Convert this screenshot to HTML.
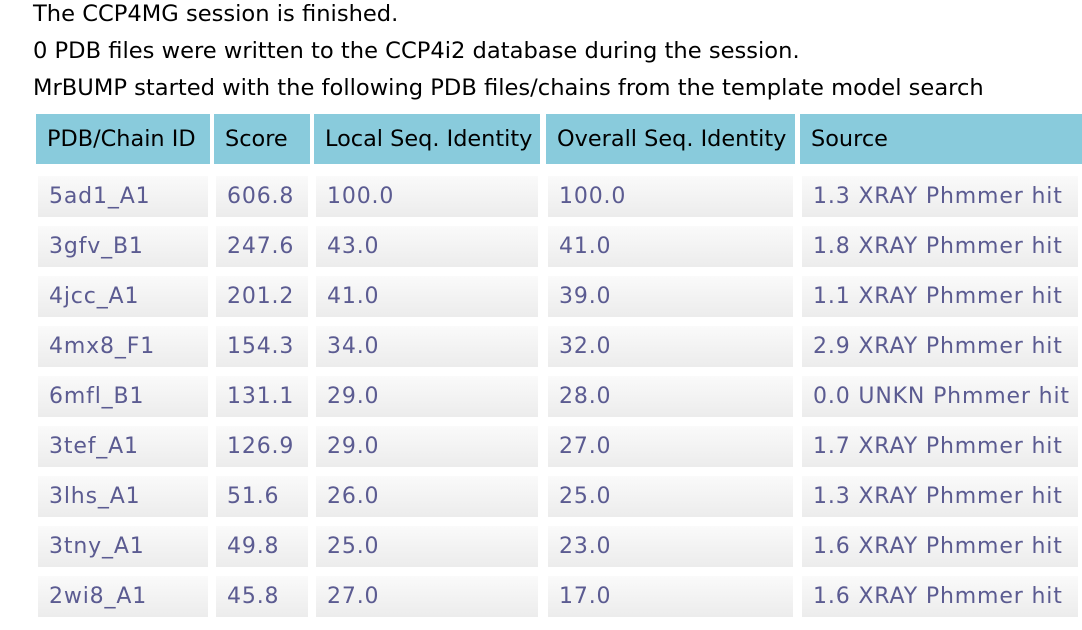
<!DOCTYPE html><html><head><meta charset="utf-8"><style>
body{margin:0;width:1082px;height:630px;background:#fff;overflow:hidden;font-family:"DejaVu Sans","Liberation Sans",sans-serif;position:relative}
.t{position:absolute;left:33px;font-size:22.6px;color:#000;white-space:nowrap}
.h{position:absolute;top:114px;height:50px;background:#89cbdc;font-size:22.4px;line-height:50px;padding-left:11px;box-sizing:border-box;color:#000;white-space:nowrap}
.c{position:absolute;height:41px;background:linear-gradient(#fafafa,#ececec);font-size:22px;line-height:41px;padding-left:11px;box-sizing:border-box;color:#5b5b91;white-space:nowrap;letter-spacing:0.85px}
</style></head><body>
<div class="t" style="top:1px">The CCP4MG session is finished.</div>
<div class="t" style="top:38px">0 PDB files were written to the CCP4i2 database during the session.</div>
<div class="t" style="top:75px">MrBUMP started with the following PDB files/chains from the template model search</div>
<div class="h" style="left:36px;width:174px">PDB/Chain ID</div>
<div class="h" style="left:214px;width:96px">Score</div>
<div class="h" style="left:314px;width:226px">Local Seq. Identity</div>
<div class="h" style="left:546px;width:249px">Overall Seq. Identity</div>
<div class="h" style="left:800px;width:282px">Source</div>
<div id="rows"></div>
<script>
var d=[["5ad1_A1","606.8","100.0","100.0","1.3 XRAY Phmmer hit"],["3gfv_B1","247.6","43.0","41.0","1.8 XRAY Phmmer hit"],["4jcc_A1","201.2","41.0","39.0","1.1 XRAY Phmmer hit"],["4mx8_F1","154.3","34.0","32.0","2.9 XRAY Phmmer hit"],["6mfl_B1","131.1","29.0","28.0","0.0 UNKN Phmmer hit"],["3tef_A1","126.9","29.0","27.0","1.7 XRAY Phmmer hit"],["3lhs_A1","51.6","26.0","25.0","1.3 XRAY Phmmer hit"],["3tny_A1","49.8","25.0","23.0","1.6 XRAY Phmmer hit"],["2wi8_A1","45.8","27.0","17.0","1.6 XRAY Phmmer hit"]];
var x=[[38,170],[216,92],[316,222],[548,245],[802,276]],h="";
d.forEach(function(r,i){r.forEach(function(v,j){h+='<div class="c" style="top:'+(176+i*50)+'px;left:'+x[j][0]+'px;width:'+x[j][1]+'px">'+v+'</div>';});});
document.getElementById("rows").innerHTML=h;
</script>
</body></html>
